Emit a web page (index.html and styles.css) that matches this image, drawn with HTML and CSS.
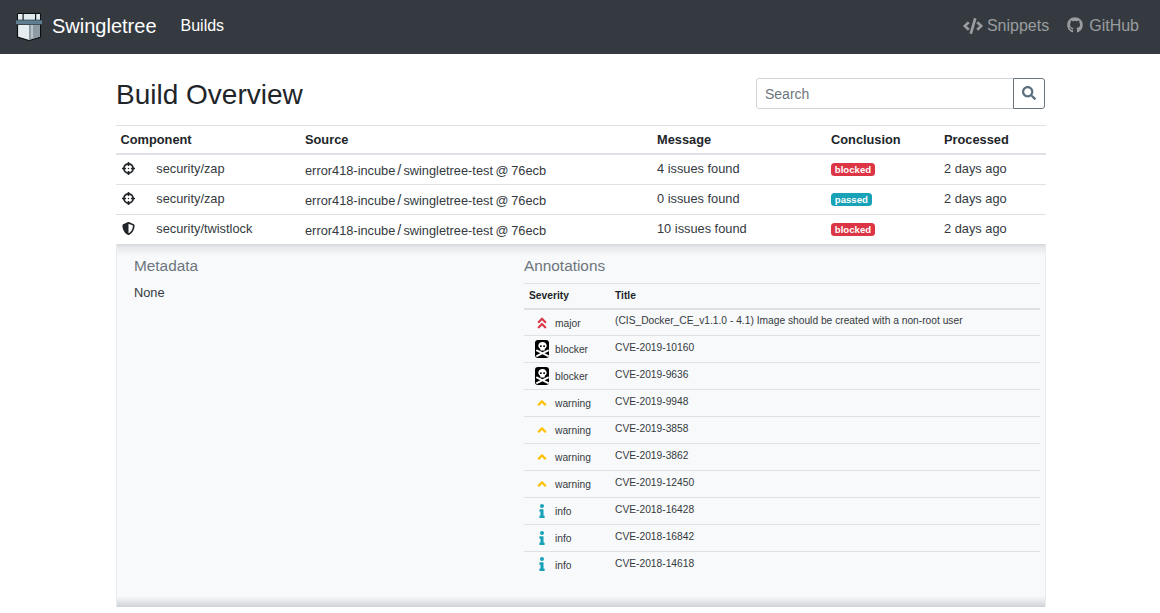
FILE: index.html
```html
<!DOCTYPE html>
<html lang="en">
<head>
<meta charset="utf-8">
<title>Swingletree</title>
<link rel="stylesheet" href="styles.css">
</head>
<body>
<svg class="sprites" xmlns="http://www.w3.org/2000/svg">
  <symbol id="i-search" viewBox="0 0 512 512"><path d="M505 442.7L405.3 343c-4.5-4.5-10.6-7-17-7H372c27.6-35.3 44-79.7 44-128C416 93.1 322.9 0 208 0S0 93.1 0 208s93.1 208 208 208c48.3 0 92.7-16.4 128-44v16.3c0 6.4 2.5 12.5 7 17l99.7 99.7c9.4 9.4 24.6 9.4 33.9 0l28.3-28.3c9.4-9.4 9.4-24.6.1-34zM208 336c-70.7 0-128-57.2-128-128 0-70.7 57.2-128 128-128 70.7 0 128 57.2 128 128 0 70.7-57.2 128-128 128z"/></symbol>
  <symbol id="i-code" viewBox="0 0 640 512"><path d="M278.9 511.5l-61-17.7c-6.4-1.8-10-8.5-8.2-14.9L346.2 8.7c1.8-6.4 8.5-10 14.9-8.2l61 17.7c6.4 1.8 10 8.5 8.2 14.9L293.8 503.3c-1.9 6.4-8.5 10.1-14.9 8.2zm-114-112.2l43.5-46.4c4.6-4.9 4.3-12.7-.8-17.2L117 256l90.6-79.7c5.1-4.5 5.5-12.3.8-17.2l-43.5-46.4c-4.5-4.8-12.1-5.1-17-.5L3.8 247.2c-5.1 4.7-5.1 12.8 0 17.5l144.1 135.1c4.9 4.6 12.5 4.4 17-.5zm327.2.6l144.1-135.1c5.1-4.7 5.1-12.8 0-17.5L492.1 112.1c-4.8-4.5-12.4-4.3-17 .5L431.6 159c-4.6 4.9-4.3 12.7.8 17.2L523 256l-90.6 79.7c-5.1 4.5-5.5 12.3-.8 17.2l43.5 46.4c4.5 4.9 12.1 5.1 17 .6z"/></symbol>
  <symbol id="i-github" viewBox="0 0 496 512"><path d="M165.9 397.4c0 2-2.3 3.6-5.2 3.6-3.3 0-5.6-1.6-5.6-3.6 0-2 2.3-3.6 5.2-3.6 3-.3 5.6 1.3 5.6 3.6zm-31.1-4.5c-.7 2 1.3 4.3 4.3 4.9 2.6 1 5.6 0 6.2-2s-1.3-4.3-4.3-5.2c-2.6-.7-5.5.3-6.2 2.3zm44.2-1.7c-2.9.7-4.9 2.6-4.6 4.9.3 2 2.9 3.3 5.9 2.6 2.9-.7 4.9-2.6 4.6-4.6-.3-1.9-3-3.2-5.9-2.9zM244.8 8C106.1 8 0 113.3 0 252c0 110.9 69.8 205.8 169.5 239.2 12.8 2.3 17.3-5.6 17.3-12.1 0-6.2-.3-40.4-.3-61.4 0 0-70 15-84.7-29.8 0 0-11.4-29.1-27.8-36.6 0 0-22.9-15.7 1.6-15.4 0 0 24.9 2 38.6 25.8 21.9 38.6 58.6 27.5 72.9 20.9 2.3-16 8.8-27.1 16-33.7-55.9-6.2-112.3-14.3-112.3-110.5 0-27.5 7.6-41.3 23.6-58.9-2.6-6.5-11.1-33.3 2.6-67.9 20.9-6.5 69 27 69 27 20-5.6 41.5-8.5 62.8-8.5s42.8 2.9 62.8 8.5c0 0 48.1-33.6 69-27 13.7 34.7 5.2 61.4 2.6 67.9 16 17.7 25.8 31.5 25.8 58.9 0 96.5-58.9 104.2-114.8 110.5 9.2 7.9 17 22.9 17 46.4 0 33.7-.3 75.4-.3 83.6 0 6.5 4.6 14.4 17.3 12.1C428.2 457.8 496 362.9 496 252 496 113.3 383.5 8 244.8 8z"/></symbol>
  <symbol id="i-crosshairs" viewBox="0 0 512 512"><path d="M500 224h-30.364C455.724 130.325 381.675 56.276 288 42.364V12c0-6.627-5.373-12-12-12h-40c-6.627 0-12 5.373-12 12v30.364C130.325 56.276 56.276 130.325 42.364 224H12c-6.627 0-12 5.373-12 12v40c0 6.627 5.373 12 12 12h30.364C56.276 381.675 130.325 455.724 224 469.636V500c0 6.627 5.373 12 12 12h40c6.627 0 12-5.373 12-12v-30.364C381.675 455.724 455.724 381.675 469.636 288H500c6.627 0 12-5.373 12-12v-40c0-6.627-5.373-12-12-12zM288 404.634V364c0-6.627-5.373-12-12-12h-40c-6.627 0-12 5.373-12 12v40.634C165.826 392.232 119.783 346.243 107.366 288H148c6.627 0 12-5.373 12-12v-40c0-6.627-5.373-12-12-12h-40.634C119.768 165.826 165.757 119.783 224 107.366V148c0 6.627 5.373 12 12 12h40c6.627 0 12-5.373 12-12v-40.634C346.174 119.768 392.217 165.757 404.634 224H364c-6.627 0-12 5.373-12 12v40c0 6.627 5.373 12 12 12h40.634C392.232 346.174 346.243 392.217 288 404.634zM288 256c0 17.673-14.327 32-32 32s-32-14.327-32-32c0-17.673 14.327-32 32-32s32 14.327 32 32z"/></symbol>
  <symbol id="i-shield" viewBox="0 0 512 512"><path d="M466.5 83.7l-192-80a48.15 48.15 0 0 0-36.9 0l-192 80C27.7 91.1 16 108.6 16 128c0 198.5 114.5 335.7 221.5 380.3 11.8 4.9 25.1 4.9 36.9 0C360.1 472.6 496 349.3 496 128c0-19.4-11.7-36.9-29.5-44.3zM256.1 446.3l-.1-381 175.9 73.3c-3.3 151.4-82.1 261.1-175.8 307.7z"/></symbol>
  <symbol id="i-major" viewBox="0 0 320 512"><path d="M177 255.7l136 136c9.4 9.4 9.4 24.6 0 33.9l-22.6 22.6c-9.4 9.4-24.6 9.4-33.9 0L160 351.9l-96.4 96.4c-9.4 9.4-24.6 9.4-33.9 0L7 425.7c-9.4-9.4-9.4-24.6 0-33.9l136-136c9.4-9.5 24.6-9.5 34-.1zm-34-192L7 199.7c-9.4 9.4-9.4 24.6 0 33.9l22.6 22.6c9.4 9.4 24.6 9.4 33.9 0l96.4-96.4 96.4 96.4c9.4 9.4 24.6 9.4 33.9 0l22.6-22.6c9.4-9.4 9.4-24.6 0-33.9l-136-136c-9.2-9.4-24.4-9.4-33.8 0z"/></symbol>
  <symbol id="i-warning" viewBox="0 0 320 512"><path d="M177 159.7l136 136c9.4 9.4 9.4 24.6 0 33.9l-22.6 22.6c-9.4 9.4-24.6 9.4-33.9 0L160 255.9l-96.4 96.4c-9.4 9.4-24.6 9.4-33.9 0L7 329.7c-9.4-9.4-9.4-24.6 0-33.9l136-136c9.4-9.5 24.6-9.5 34-.1z"/></symbol>
  <symbol id="i-info" viewBox="0 0 192 512"><path d="M20 424.229h20V279.771H20c-11.046 0-20-8.954-20-20V212c0-11.046 8.954-20 20-20h112c11.046 0 20 8.954 20 20v212.229h20c11.046 0 20 8.954 20 20V492c0 11.046-8.954 20-20 20H20c-11.046 0-20-8.954-20-20v-47.771c0-11.046 8.954-20 20-20zM96 0C56.235 0 24 32.235 24 72s32.235 72 72 72 72-32.235 72-72S135.764 0 96 0z"/></symbol>
  <symbol id="i-skull" viewBox="0 0 448 512"><path d="M439.15 453.06L297.17 384l141.99-69.06c7.9-3.95 11.11-13.56 7.15-21.46L432 264.85c-3.95-7.9-13.56-11.11-21.47-7.16L224 348.41 37.47 257.69c-7.9-3.95-17.51-.75-21.47 7.16L1.69 293.48c-3.95 7.9-.75 17.51 7.15 21.46L150.83 384 8.85 453.06c-7.9 3.95-11.11 13.56-7.15 21.47l14.31 28.63c3.95 7.9 13.56 11.11 21.47 7.15L224 419.59l186.53 90.72c7.9 3.95 17.51.75 21.47-7.15l14.31-28.63c3.95-7.91.74-17.52-7.16-21.47zM150 237.28l-5.48 25.87c-2.67 12.62 5.42 24.85 16.45 24.85h126.08c11.03 0 19.12-12.23 16.45-24.85l-5.5-25.87c41.78-22.41 70-62.75 70-109.28C368 57.31 303.53 0 224 0S80 57.31 80 128c0 46.53 28.22 86.87 70 109.28zM280 112c17.65 0 32 14.35 32 32s-14.35 32-32 32-32-14.35-32-32 14.35-32 32-32zm-112 0c17.65 0 32 14.35 32 32s-14.35 32-32 32-32-14.35-32-32 14.35-32 32-32z"/></symbol>
</svg>

<nav class="navbar">
  <a class="brand" href="#">
    <svg class="logo" viewBox="0 0 28 28" xmlns="http://www.w3.org/2000/svg">
      <path d="M2.500.5h23v7.500h-23z" fill="#dfeaee" stroke="#0b0f12" stroke-width="1"/>
      <path d="M7.500 1h1.200v6.500H7.500zM20 1h1.200v6.500H20z" fill="#14191d"/>
      <path d="M2.500 11v13l11.500 3.500l11.500-3.500V11z" fill="#e6edf0" stroke="#0b0f12" stroke-width="1.200"/>
      <path d="M14 11h11v12.500l-11 3.400z" fill="#8e9ba2"/>
      <path d="M16 11.500h2v13.500l-2 .6z" fill="#b9c4ca"/>
      <path d="M.5 7h27v4.500H.5z" fill="#5f7f90" stroke="#20282e" stroke-width=".6"/>
    </svg>
    Swingletree
  </a>
  <a class="nav-link nav-active" href="#">Builds</a>
  <div class="nav-right">
    <a class="nav-link" href="#"><svg class="nav-icon code-icon"><use href="#i-code"/></svg> Snippets</a>
    <a class="nav-link" href="#"><svg class="nav-icon gh-icon"><use href="#i-github"/></svg> GitHub</a>
  </div>
</nav>

<main class="container">
  <header class="page-head">
    <h1>Build Overview</h1>
    <form class="search">
      <input type="text" placeholder="Search">
      <button type="button"><svg><use href="#i-search"/></svg></button>
    </form>
  </header>

  <table class="builds">
    <colgroup><col class="c1"><col class="c2"><col class="c3"><col class="c4"><col class="c5"></colgroup>
    <thead>
      <tr><th>Component</th><th>Source</th><th>Message</th><th>Conclusion</th><th>Processed</th></tr>
    </thead>
    <tbody>
      <tr>
        <td><span class="comp"><svg class="comp-icon"><use href="#i-crosshairs"/></svg>security/zap</span></td>
        <td class="src">error418-incube<span class="sep">/</span>swingletree-test<span class="at">@</span>76ecb</td>
        <td>4 issues found</td>
        <td><span class="badge danger">blocked</span></td>
        <td>2 days ago</td>
      </tr>
      <tr>
        <td><span class="comp"><svg class="comp-icon"><use href="#i-crosshairs"/></svg>security/zap</span></td>
        <td class="src">error418-incube<span class="sep">/</span>swingletree-test<span class="at">@</span>76ecb</td>
        <td>0 issues found</td>
        <td><span class="badge info">passed</span></td>
        <td>2 days ago</td>
      </tr>
      <tr>
        <td><span class="comp"><svg class="comp-icon"><use href="#i-shield"/></svg>security/twistlock</span></td>
        <td class="src">error418-incube<span class="sep">/</span>swingletree-test<span class="at">@</span>76ecb</td>
        <td>10 issues found</td>
        <td><span class="badge danger">blocked</span></td>
        <td>2 days ago</td>
      </tr>
    </tbody>
  </table>

  <section class="detail">
    <div class="meta">
      <h2>Metadata</h2>
      <p>None</p>
    </div>
    <div class="annotations">
      <h2>Annotations</h2>
      <table class="anno">
        <colgroup><col class="a1"><col></colgroup>
        <thead><tr><th>Severity</th><th>Title</th></tr></thead>
        <tbody>
          <tr><td><span class="sev"><span class="sev-box"><svg class="sev-icon major"><use href="#i-major"/></svg></span>major</span></td><td>(CIS_Docker_CE_v1.1.0 - 4.1) Image should be created with a non-root user</td></tr>
          <tr><td><span class="sev"><span class="sev-box"><span class="skull"><svg><use href="#i-skull"/></svg></span></span>blocker</span></td><td>CVE-2019-10160</td></tr>
          <tr><td><span class="sev"><span class="sev-box"><span class="skull"><svg><use href="#i-skull"/></svg></span></span>blocker</span></td><td>CVE-2019-9636</td></tr>
          <tr><td><span class="sev"><span class="sev-box"><svg class="sev-icon warning"><use href="#i-warning"/></svg></span>warning</span></td><td>CVE-2019-9948</td></tr>
          <tr><td><span class="sev"><span class="sev-box"><svg class="sev-icon warning"><use href="#i-warning"/></svg></span>warning</span></td><td>CVE-2019-3858</td></tr>
          <tr><td><span class="sev"><span class="sev-box"><svg class="sev-icon warning"><use href="#i-warning"/></svg></span>warning</span></td><td>CVE-2019-3862</td></tr>
          <tr><td><span class="sev"><span class="sev-box"><svg class="sev-icon warning"><use href="#i-warning"/></svg></span>warning</span></td><td>CVE-2019-12450</td></tr>
          <tr><td><span class="sev"><span class="sev-box"><svg class="sev-icon inf"><use href="#i-info"/></svg></span>info</span></td><td>CVE-2018-16428</td></tr>
          <tr><td><span class="sev"><span class="sev-box"><svg class="sev-icon inf"><use href="#i-info"/></svg></span>info</span></td><td>CVE-2018-16842</td></tr>
          <tr><td><span class="sev"><span class="sev-box"><svg class="sev-icon inf"><use href="#i-info"/></svg></span>info</span></td><td>CVE-2018-14618</td></tr>
        </tbody>
      </table>
    </div>
  </section>
</main>
</body>
</html>
```

FILE: styles.css
```css
* { box-sizing: border-box; }
html, body { height: 100%; }
body {
  margin: 0;
  overflow: hidden;
  background: #fff;
  color: #212529;
  font-family: "Liberation Sans", Arial, sans-serif;
  font-size: 16px;
  line-height: 1.5;
}
a { text-decoration: none; color: inherit; }
.sprites { display: none; }

.navbar {
  display: flex;
  align-items: center;
  height: 54px;
  padding: 0 21px 2px 15px;
  background: #343a40;
}
.brand {
  display: flex;
  align-items: center;
  font-size: 20px;
  color: #fff;
  margin-right: 24px;
}
.logo { width: 28px; height: 28px; margin: 2px 9px 0 0; }
.nav-link { color: rgba(255,255,255,.5); display: flex; align-items: center; }
.nav-active { color: #fff; }
.nav-right { margin-left: auto; display: flex; gap: 18px; }
.nav-icon { width: 16px; height: 16px; fill: currentColor; margin-right: 4px; }
.code-icon { width: 20px; }
.gh-icon { margin: 0 6px 2px 0; }

.container { width: 930px; margin: 0 0 0 116px; }
.page-head {
  display: flex;
  align-items: center;
  justify-content: space-between;
  height: 71px;
  padding-right: 1px;
}
h1 { margin: 11px 0 0; font-size: 28px; font-weight: 400; line-height: 1.2; }
.search { display: flex; margin-top: 7px; }
.search input {
  width: 258px;
  height: 31px;
  padding: 5px 8px 3px;
  border: 1px solid #ced4da;
  border-radius: 3px 0 0 3px;
  font: 14px "Liberation Sans", Arial, sans-serif;
  color: #495057;
  outline: 0;
}
.search input::placeholder { color: #6c757d; opacity: 1; }
.search button {
  width: 32px;
  height: 31px;
  margin-left: -1px;
  padding: 0;
  display: flex;
  align-items: center;
  justify-content: center;
  background: #fff;
  border: 1px solid #6c757d;
  border-radius: 0 3px 3px 0;
  color: #5a6f80;
}
.search button svg { width: 14px; height: 14px; fill: currentColor; }

table { border-collapse: collapse; width: 100%; table-layout: fixed; }
.builds { border-collapse: separate; border-spacing: 0; font-size: 12.8px; line-height: 19.2px; color: #343a40; }
.c1 { width: 184.5px; } .c2 { width: 352px; } .c3 { width: 174px; } .c4 { width: 113px; } .c5 { width: 106.5px; }
.builds th {
  height: 30px;
  padding: 3px 4.5px;
  text-align: left;
  font-weight: 700;
  color: #212529;
  border-top: 1px solid #dee2e6;
  border-bottom: 2px solid #dee2e6;
}
.builds td { padding: 3px 4.5px 5px; height: 30px; border-bottom: 1px solid #dee2e6; vertical-align: middle; }
.builds tbody tr:last-child td { border-bottom: 0; height: 29px; }
.comp { display: flex; align-items: center; }
.comp-icon { width: 13px; height: 13px; margin: 0 21.8px 0 1px; fill: #212529; flex: none; }
.builds .src { padding: 5px 4.5px 3px; }
.sep { margin: 0 2px; font-size: 14.5px; line-height: 1; }
.at { margin: 0 2.6px; }

.badge {
  display: inline-block;
  padding: 2px 3.84px;
  font-size: 9.6px;
  line-height: 1;
  font-weight: 700;
  color: #fff;
  border-radius: 3.5px;
}
.danger { background: #dc3545; }
.info { background: #17a2b8; }

.detail {
  display: flex;
  height: 363px;
  padding: 10px 5px 0 17px;
  background: linear-gradient(#d6d9dc 0, #e8eaec 4px, #f8f9fa 12px, #f8f9fa 352px, #e2e5e8 358px, #ced2d6 363px);
  border-left: 1px solid #e9ecef;
  border-right: 1px solid #e9ecef;
}
.detail h2 { margin: 0 0 6px; font-size: 15.36px; font-weight: 400; line-height: 23px; color: #6c757d; }
.meta { width: 390px; flex: none; }
.meta p { margin: 0; font-size: 12.8px; line-height: 19.2px; color: #343a40; }
.annotations { flex: 1; }
.anno { font-size: 10.24px; line-height: 15.36px; color: #343a40; }
.a1 { width: 86px; }
.anno th {
  padding: 4px 5px;
  height: 25px;
  text-align: left;
  font-weight: 700;
  color: #212529;
  border-top: 1px solid #dee2e6;
  border-bottom: 2px solid #dee2e6;
}
.anno td { padding: 4px 5px 0; height: 27px; border-bottom: 1px solid #dee2e6; vertical-align: top; }
.anno tbody tr:first-child td { padding-top: 3px; }
.anno tbody tr:last-child td { border-bottom: 0; }
.anno td:first-child { vertical-align: middle; }
.anno tbody td:first-child { padding-top: 0; }
.anno tbody tr:last-child td:first-child { padding-bottom: 2px; }
.sev { display: flex; align-items: center; padding-top: 2px; }
.anno tbody tr:first-child .sev { padding-top: 0; }
.sev-box { width: 26px; display: flex; justify-content: center; flex: none; margin-top: -2px; }
.sev-icon { height: 14px; width: 10px; }
.major { fill: #dc3545; }
.warning { fill: #ffc107; }
.inf { fill: #17a2b8; }
.skull {
  width: 14px;
  height: 18px;
  background: #000;
  border-radius: 3px;
  display: flex;
  align-items: center;
  justify-content: center;
}
.skull svg { width: 13px; height: 15px; fill: #fff; }
```
